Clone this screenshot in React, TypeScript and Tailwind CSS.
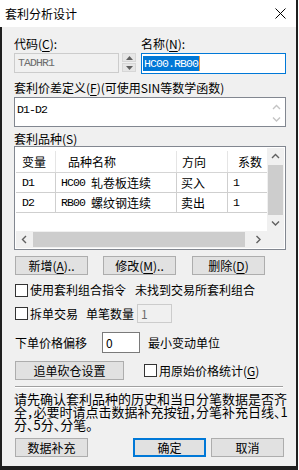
import React from "react";

const F = "font-['Noto_Sans_CJK_SC','Noto_Sans',sans-serif]";
const M = "font-['Liberation_Mono','Noto_Sans_CJK_SC',monospace] text-[11.5px] tracking-[-0.9px]";

const U = ({ children }: { children: React.ReactNode }) => (
  <span className="underline underline-offset-[2px]">{children}</span>
);

const Btn = ({ children, w = "w-[73px]", focus = false }: { children: React.ReactNode; w?: string; focus?: boolean }) => (
  <div
    className={
      focus
        ? `${w} h-[19px] shrink-0 flex items-center justify-center bg-[#e1e1e1] border-2 border-[#0078d7] text-[12px] leading-[14px]`
        : `${w} h-[19px] shrink-0 flex items-center justify-center bg-[#e1e1e1] border border-[#adadad] text-[12px] leading-[14px]`
    }
  >
    {children}
  </div>
);

const Check = () => <div className="w-[13px] h-[13px] shrink-0 border border-[#333333] bg-white" />;

const Chev = ({ dir, color = "#606060" }: { dir: "up" | "down" | "left" | "right"; color?: string }) => {
  const d =
    dir === "up"
      ? "M1 5 L4.5 1.5 L8 5"
      : dir === "down"
      ? "M1 1.5 L4.5 5 L8 1.5"
      : dir === "left"
      ? "M5 1 L1.5 4.5 L5 8"
      : "M1.5 1 L5 4.5 L1.5 8";
  const w = dir === "up" || dir === "down" ? 9 : 7;
  const h = dir === "up" || dir === "down" ? 7 : 9;
  return (
    <svg width={w} height={h} viewBox={`0 0 ${w} ${h}`}>
      <path d={d} fill="none" stroke={color} strokeWidth="1.4" />
    </svg>
  );
};

const Tri = ({ up }: { up: boolean }) => (
  <svg width="7" height="4" viewBox="0 0 7 4">
    <path d={up ? "M0 4 L3.5 0 L7 4 Z" : "M0 0 L3.5 4 L7 0 Z"} fill="#606060" />
  </svg>
);

const rows = [
  { v: "D1", code: "HC00", name: "轧卷板连续", dir: "买入", k: "1" },
  { v: "D2", code: "RB00", name: "螺纹钢连续", dir: "卖出", k: "1" },
];

export default function App() {
  return (
    <div className={`w-[299px] h-[470px] bg-white ${F} text-black`}>
      <div className="w-[298px] h-[470px] flex flex-col border-r-2 border-[#1f1f1f]">
        {/* Title bar */}
        <div className="h-[27px] shrink-0 bg-white flex items-center justify-between pl-[5px] pr-[10px]">
          <span className="text-[12px] leading-[14px]">套利分析设计</span>
          <svg width="11" height="11" viewBox="0 0 11 11">
            <path d="M0.5 0.5 L10.5 10.5 M10.5 0.5 L0.5 10.5" stroke="#000" strokeWidth="1" />
          </svg>
        </div>

        {/* Body */}
        <div className="flex-1 bg-[#f0f0f0] border-l-2 border-b-4 border-[#1f1f1f] pl-[12px] pr-[10px] flex flex-col text-[12px] leading-[14px]">
          <div className="mt-[10px] flex h-[14px]">
            <div className="w-[127px]">
              代码(<U>C</U>):
            </div>
            <div>
              名称(<U>N</U>):
            </div>
          </div>

          <div className="mt-[2px] flex items-start">
            <div className="w-[105px] h-[20px] border border-[#cccccc] bg-[#f0f0f0] flex items-center pl-[3px] text-[#6d6d6d]">
              <span className={M}>TADHR1</span>
            </div>
            <div className="ml-[3px] w-[14px] flex flex-col gap-[1px]">
              <div className="h-[9px] bg-[#e6e6e6] border border-[#d6d6d6] flex items-center justify-center">
                <Tri up />
              </div>
              <div className="h-[9px] bg-[#e6e6e6] border border-[#d6d6d6] flex items-center justify-center">
                <Tri up={false} />
              </div>
            </div>
            <div className="ml-[5px] w-[145px] h-[21px] border border-[#0078d7] bg-white flex items-center pl-[1px]">
              <span className={`${M} bg-[#0078d7] text-white h-[15px] flex items-center px-[1px]`}>HC00.RB00</span>
              <span className="w-[1px] h-[15px] bg-[#f59a3c]" />
            </div>
          </div>

          <div className="mt-[7px] h-[14px] whitespace-nowrap">
            套利价差定义(<U>F</U>)(可使用SIN等数学函数)
          </div>

          <div className="mt-[2px] h-[30px] border border-[#828790] bg-white flex">
            <div className="flex-1 pl-[2px] pt-[3px]">
              <span className={M}>D1-D2</span>
            </div>
            <div className="w-[17px] flex flex-col items-center pt-[6px] gap-[5px]">
              <Chev dir="up" color="#c4c4c4" />
              <Chev dir="down" color="#c4c4c4" />
            </div>
          </div>

          <div className="mt-[5px] h-[14px]">
            套利品种(<U>S</U>)
          </div>

          {/* List */}
          <div className="h-[104px] border border-[#828790] bg-white p-[1px] flex flex-col">
            <div className="flex flex-1 min-h-0">
              <div className="w-[251px] overflow-hidden flex flex-col">
                <div className="h-[25px] shrink-0 flex border-b border-[#d5d5d5] pt-[3px]">
                  <div className="w-[40px] shrink-0 border-r border-[#e5e5e5] pl-[6px] flex items-center">变量</div>
                  <div className="w-[121px] shrink-0 border-r border-[#e5e5e5] pl-[12px] flex items-center">品种名称</div>
                  <div className="w-[51px] shrink-0 border-r border-[#e5e5e5] pl-[5px] flex items-center">方向</div>
                  <div className="w-[60px] shrink-0 pl-[10px] flex items-center">系数</div>
                </div>
                {rows.map((r) => (
                  <div key={r.v} className="h-[20px] shrink-0 flex border-b border-[#cfcfcf]">
                    <div className="w-[40px] shrink-0 border-r border-[#cfcfcf] pl-[6px] flex items-center">
                      <span className={M}>{r.v}</span>
                    </div>
                    <div className="w-[121px] shrink-0 border-r border-[#cfcfcf] pl-[5px] flex items-center whitespace-nowrap">
                      <span className={M}>{r.code}</span>
                      <span className="ml-[6px]">{r.name}</span>
                    </div>
                    <div className="w-[51px] shrink-0 border-r border-[#cfcfcf] pl-[4px] flex items-center">{r.dir}</div>
                    <div className="w-[60px] shrink-0 pl-[5px] flex items-center">
                      <span className={M}>{r.k}</span>
                    </div>
                  </div>
                ))}
              </div>
              <div className="w-[17px] bg-[#f0f0f0] flex flex-col">
                <div className="h-[17px] shrink-0 flex items-center justify-center">
                  <Chev dir="up" />
                </div>
                <div className="h-[50px] shrink-0 mx-[1px] bg-[#cdcdcd]" />
                <div className="flex-1" />
                <div className="h-[15px] shrink-0 flex items-center justify-center">
                  <Chev dir="down" />
                </div>
              </div>
            </div>
            <div className="h-[17px] shrink-0 flex">
              <div className="w-[251px] bg-[#f0f0f0] flex">
                <div className="w-[17px] shrink-0 flex items-center justify-center">
                  <Chev dir="left" />
                </div>
                <div className="w-[212px] shrink-0 my-[1px] bg-[#cdcdcd]" />
                <div className="flex-1" />
                <div className="w-[17px] shrink-0 flex items-center justify-center">
                  <Chev dir="right" />
                </div>
              </div>
              <div className="w-[17px] bg-[#f0f0f0]" />
            </div>
          </div>

          {/* Buttons */}
          <div className="mt-[6px] flex">
            <div className="ml-[1px]">
              <Btn>
                新增(<U>A</U>)..
              </Btn>
            </div>
            <div className="ml-[15px]">
              <Btn>
                修改(<U>M</U>)..
              </Btn>
            </div>
            <div className="ml-[16px]">
              <Btn>
                删除(<U>D</U>)
              </Btn>
            </div>
          </div>

          <div className="mt-[8px] ml-[1px] h-[14px] flex items-center whitespace-nowrap">
            <Check />
            <span className="ml-[2px]">使用套利组合指令</span>
            <span className="ml-[9px]">未找到交易所套利组合</span>
          </div>

          <div className="mt-[7px] ml-[1px] h-[19px] flex items-center whitespace-nowrap">
            <Check />
            <span className="ml-[2px]">拆单交易</span>
            <span className="ml-[8px]">单笔数量</span>
            <div className="ml-[3px] w-[35px] h-[19px] border border-[#cccccc] bg-[#f0f0f0] text-[#6d6d6d] pl-[3px] flex items-center">
              1
            </div>
          </div>

          <div className="mt-[9px] ml-[1px] h-[21px] flex items-center whitespace-nowrap">
            <span>下单价格偏移</span>
            <div className="ml-[15px] w-[38px] h-[21px] border border-[#7a7a7a] bg-white pl-[3px] flex items-center">0</div>
            <span className="ml-[8px]">最小变动单位</span>
          </div>

          <div className="mt-[8px] ml-[1px] flex items-center whitespace-nowrap">
            <Btn w="w-[109px]">追单砍仓设置</Btn>
            <div className="ml-[20px]">
              <Check />
            </div>
            <span className="ml-[2px]">
              用原始价格统计(<U>G</U>)
            </span>
          </div>

          <div className="mt-[6px] ml-[1px] w-[268px] h-[2px] border-t border-[#a0a0a0] border-b border-b-white" />

          <div className="mt-[4px] text-[13px] leading-[13px] [font-feature-settings:'halt'] whitespace-nowrap">
            <div className="h-[13px]">请先确认套利品种的历史和当日分笔数据是否齐</div>
            <div className="h-[13px]">全，必要时请点击数据补充按钮，分笔补充日线、1</div>
            <div className="h-[13px]">分、5分、分笔。</div>
          </div>

          <div className="mt-[7px] flex">
            <div className="ml-[1px]">
              <Btn>数据补充</Btn>
            </div>
            <div className="ml-[45px]">
              <Btn focus>确定</Btn>
            </div>
            <div className="ml-[5px]">
              <Btn>取消</Btn>
            </div>
          </div>
        </div>
      </div>
    </div>
  );
}
